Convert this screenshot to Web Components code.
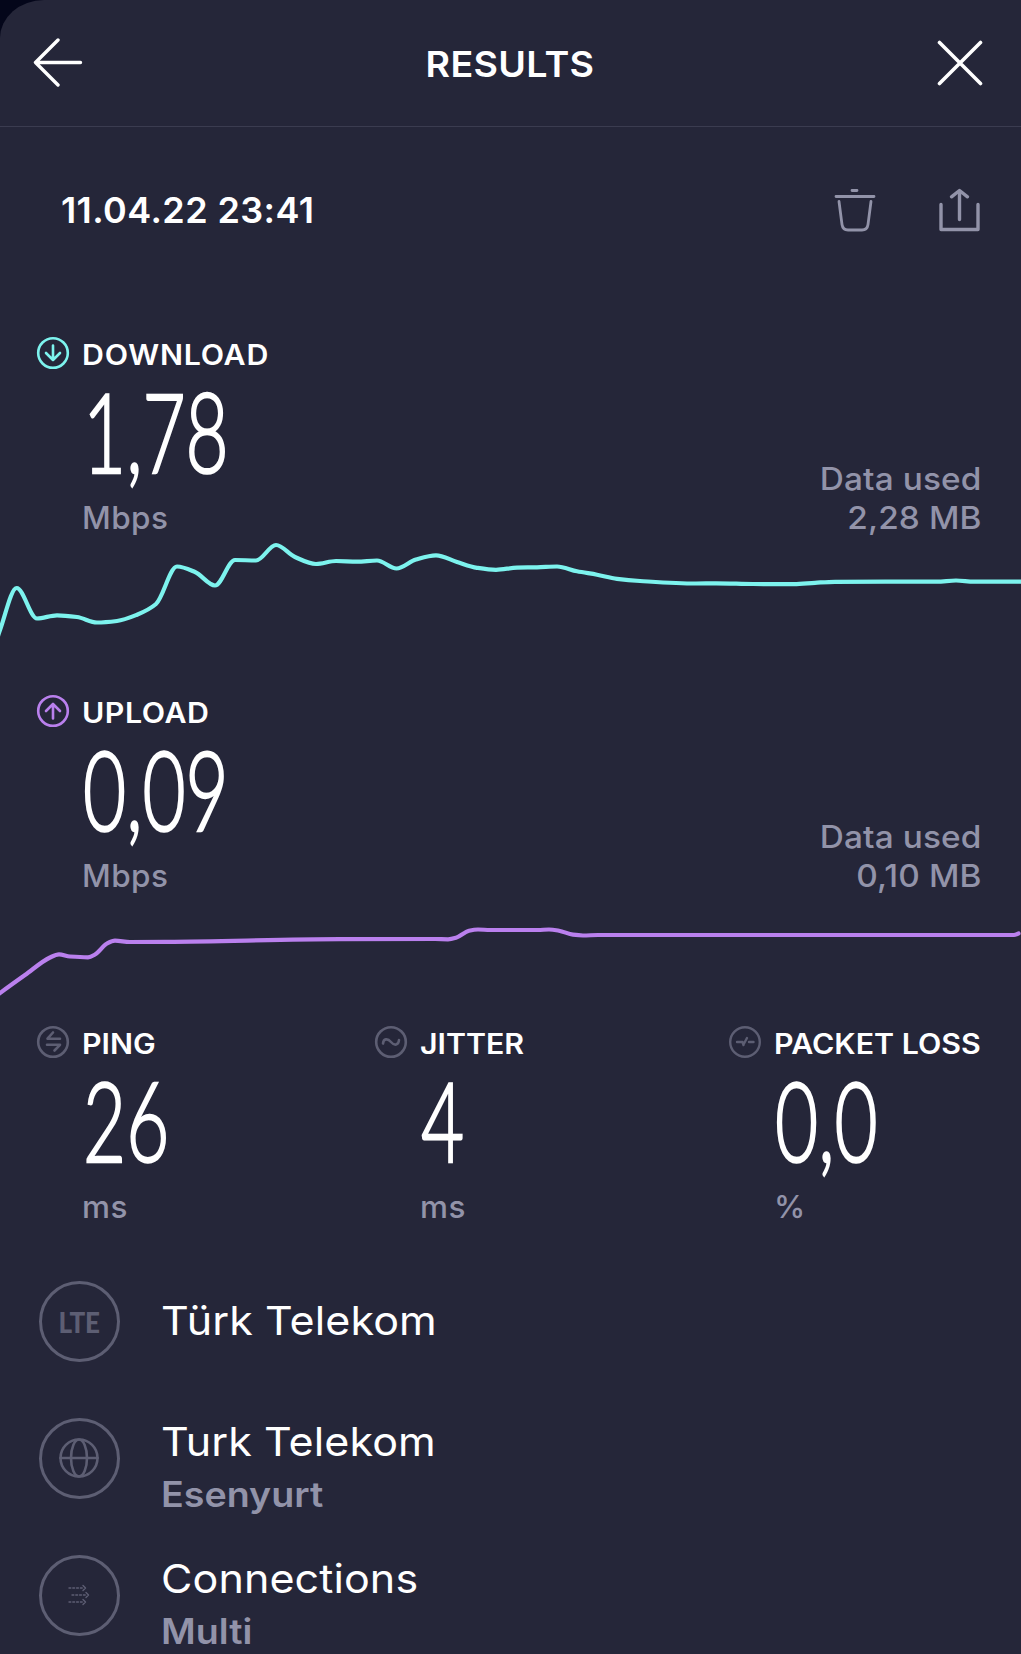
<!DOCTYPE html>
<html lang="en">
<head>
<meta charset="UTF-8">
<title>Results</title>
<style>
  :root {
    --bg: #252639;
    --backdrop: #04061a;
    --line: #3b3c50;
    --text: #ffffff;
    --muted: #9293a9;
    --ring: #5d5e73;
    --download: #7df3ee;
    --upload: #ba80ee;
  }
  body {
    margin: 0;
    background: var(--backdrop);
    color: var(--text);
    font-family: Inter, "Liberation Sans", sans-serif;
  }
</style>
</head>
<body>
<results-page>
  <page-header>RESULTS</page-header>
  <result-toolbar>11.04.22 23:41</result-toolbar>
  <speed-panel kind="download" label="DOWNLOAD" value="1,78" used="2,28 MB" tracking="0.7"></speed-panel>
  <speed-panel kind="upload" label="UPLOAD" value="0,09" used="0,10 MB" tracking="0.5"></speed-panel>
  <metric-row>
    <metric-value icon="ping" label="PING" value="26" unit="ms"></metric-value>
    <metric-value icon="jitter" label="JITTER" value="4" unit="ms"></metric-value>
    <metric-value icon="loss" label="PACKET LOSS" value="0,0" unit="%"></metric-value>
  </metric-row>
  <info-row icon="lte" name="Türk Telekom"></info-row>
  <info-row icon="globe" name="Turk Telekom" sub="Esenyurt"></info-row>
  <info-row icon="multi" name="Connections" sub="Multi"></info-row>
</results-page>

<script>
const ICONS = {
  back: `<svg width="50" height="50" viewBox="0 0 50 50" stroke-width="3.4"><path d="M25 2 2.500 24.500 25 47M2.500 24.500H47.500"/></svg>`,
  close: `<svg width="46" height="46" viewBox="0 0 46 46" stroke-width="3.6"><path d="M2.500 2.500l41 41M43.500 2.500l-41 41"/></svg>`,
  trash: `<svg width="42" height="44" viewBox="0 0 42 44" stroke-width="2.800"><path d="M18 2.500h5M2 8.500h38M5 13.500l3 23q.8 5.500 6 5.500h14q5.200 0 6-5.500l3-23"/></svg>`,
  share: `<svg width="42" height="44" viewBox="0 0 42 44" stroke-width="3.400"><path d="M2 16.500v25h37v-25M20.500 31.500V3M12.500 8.800 20.500 2.500l8 6.300"/></svg>`,
  download: `<svg width="34" height="34" viewBox="0 0 34 34" stroke-width="2.600"><circle cx="17" cy="17" r="14.800"/><path d="M17 9.500v14.500M10 17l7 7 7-7"/></svg>`,
  upload: `<svg width="34" height="34" viewBox="0 0 34 34" stroke-width="2.600"><circle cx="17" cy="17" r="14.800"/><path d="M17 24.500V10M10 17l7-7 7 7"/></svg>`,
  ping: `<svg width="34" height="34" viewBox="0 0 34 34" stroke-width="2.600"><circle cx="17" cy="17" r="14.800"/><path d="M17 7.500 11.500 13.700H24M11 19.800H24L18.500 25.500"/></svg>`,
  jitter: `<svg width="34" height="34" viewBox="0 0 34 34" stroke-width="2.600"><circle cx="17" cy="17" r="14.800"/><path d="M9 18.500c.5-5 4.500-5.500 8-1.500s7.500 3.500 8-2"/></svg>`,
  loss: `<svg width="34" height="34" viewBox="0 0 34 34" stroke-width="2.400"><circle cx="17" cy="17" r="14.800"/><path d="M9 17h5.500l1 3M15.500 19.500l3.500-6.500M21 17h4.500"/></svg>`,
  globe: `<svg width="42" height="42" viewBox="0 0 42 42" stroke-width="2.600"><circle cx="21" cy="21" r="18.500"/><ellipse cx="21" cy="21" rx="8" ry="18.500"/><path d="M2.500 21h37"/></svg>`,
  multi: `<svg width="24" height="24" viewBox="0 0 24 24" stroke-width="1.400"><path stroke-dasharray="1.800 2" d="M2 5h15M5 12h15M2 19h15"/><path d="M16 2.500 18.500 5 16 7.500M19 9.500 21.500 12 19 14.500M16 16.500 18.500 19 16 21.500"/></svg>`,
  lte: `<span class="lte">LTE</span>`
};

const CHARTS = {
  download: {
    top: 537,
    height: 114,
    points: [[-2, 636], [0, 630], [16.7, 588], [37, 618.500], [57, 615.300], [77, 617], [97, 622.500], [117, 621], [137, 614.700], [156, 604], [177, 566.500], [195, 572], [215, 585.500], [235, 560], [256, 560.500], [276, 545], [295, 557], [316, 564], [336, 561], [357, 561.700], [377, 560.500], [396.500, 568.500], [416, 559.500], [436, 555.300], [457, 562], [477, 567.800], [496, 569.800], [517, 567.600], [537, 567.300], [557, 566.500], [577, 571.300], [597, 574.700], [617, 578.800], [640, 581], [696, 583.500], [716, 583.300], [753, 584], [794, 584.200], [815, 582.800], [835, 581.800], [937, 581.600], [956, 580.500], [974, 581.700], [1022, 581.600]]
  },
  upload: {
    top: 895,
    height: 133,
    points: [[-2, 994.500], [0, 993], [25, 975], [50, 957.500], [59, 954.300], [70, 956.500], [88, 957.300], [95, 954.500], [107, 943.500], [115, 940.600], [130, 942], [167, 941.800], [340, 939.200], [435, 939], [448, 939.300], [456, 937.800], [469, 930.800], [478, 929.500], [490, 930], [538, 930], [549, 929.500], [559, 930.700], [573, 934.700], [583, 935.500], [598, 935], [1014, 935], [1018.500, 933.500]]
  }
};

// Each segment uses the slope of its neighbours, flattened at local peaks.
function smoothPath(points) {
  const slope = points.map((p, i) => {
    const a = points[i - 1], b = points[i + 1];
    if (!a || !b) return null;
    const s0 = (p[1] - a[1]) / (p[0] - a[0]);
    const s1 = (b[1] - p[1]) / (b[0] - p[0]);
    return s0 * s1 <= 0 ? 0 : (2 * s0 * s1) / (s0 + s1);
  });
  let d = `M${points[0]}`;
  for (let i = 1; i < points.length; i++) {
    const [x0, y0] = points[i - 1], [x1, y1] = points[i];
    const h = (x1 - x0) / 3;
    const line = (y1 - y0) / (x1 - x0);
    const m0 = slope[i - 1] ?? line, m1 = slope[i] ?? line;
    d += `C${x0 + h} ${y0 + m0 * h} ${x1 - h} ${y1 - m1 * h} ${x1} ${y1}`;
  }
  return d;
}

const SVG_STYLE = `svg { display: block; fill: none; stroke: currentColor; stroke-linecap: round; stroke-linejoin: round; }`;

class BaseElement extends HTMLElement {
  constructor() {
    super();
    this.attachShadow({ mode: "open" });
  }

  connectedCallback() {
    this.shadowRoot.innerHTML = `<style>${SVG_STYLE}</style>` + this.template();
  }

  attr(name) {
    return this.getAttribute(name) || "";
  }
}

class ResultsPage extends BaseElement {
  template() {
    return `
      <style>
        :host {
          display: block;
          height: 1654px;
          overflow: hidden;
          background: var(--bg);
          border-top-left-radius: 44px 38px;
        }
      </style>
      <slot></slot>
    `;
  }
}
customElements.define("results-page", ResultsPage);

class PageHeader extends BaseElement {
  template() {
    return `
      <style>
        :host {
          display: grid;
          grid-template-columns: 50px 1fr 46px;
          align-items: center;
          height: 126px;
          padding: 0 38px 0 33px;
          border-bottom: 1px solid var(--line);
        }
        h1 {
          margin: 0;
          padding-top: 2px;
          text-align: center;
          font-size: 36px;
          font-weight: 600;
          letter-spacing: 0.3px;
          transform: scaleX(1.045);
        }
      </style>
      ${ICONS.back}
      <h1><slot></slot></h1>
      ${ICONS.close}
    `;
  }
}
customElements.define("page-header", PageHeader);

class ResultToolbar extends BaseElement {
  template() {
    return `
      <style>
        :host {
          display: flex;
          align-items: center;
          height: 166px;
          padding: 0 40px 0 61px;
        }
        .date {
          flex: 1;
          font-size: 36px;
          font-weight: 600;
          letter-spacing: 0.4px;
        }
        .actions {
          display: flex;
          gap: 63px;
          color: var(--muted);
        }
      </style>
      <span class="date"><slot></slot></span>
      <div class="actions">${ICONS.trash}${ICONS.share}</div>
    `;
  }
}
customElements.define("result-toolbar", ResultToolbar);

class MetricValue extends BaseElement {
  template() {
    return `
      <style>
        :host {
          display: grid;
          grid-template-columns: 34px max-content;
          column-gap: 12px;
        }
        .icon {
          color: var(--icon, var(--ring));
          margin-top: -3px;
          height: 34px;
        }
        .label {
          font-size: 28px;
          font-weight: 600;
          line-height: 32px;
          height: 32px;
          letter-spacing: ${this.attr("tracking") || 0}px;
          white-space: nowrap;
          transform: scaleX(1.083);
          transform-origin: 0 0;
        }
        .value {
          grid-column: 2;
          justify-self: start;
          width: 0;
          margin: 14px 0 0 1px;
          font-family: Lato, "Open Sans", sans-serif;
          font-size: 111px;
          font-weight: 300;
          line-height: 90px;
          white-space: nowrap;
          transform: scaleX(0.67);
          transform-origin: 0 0;
          -webkit-text-stroke: 2.4px currentColor;
        }
        .unit {
          grid-column: 2;
          margin-top: 23px;
          color: var(--muted);
          font-size: 31.5px;
          font-weight: 500;
          line-height: 39px;
          letter-spacing: 0.4px;
        }
      </style>
      <span class="icon">${ICONS[this.attr("icon")]}</span>
      <span class="label">${this.attr("label")}</span>
      <span class="value">${this.attr("value")}</span>
      <span class="unit">${this.attr("unit")}</span>
    `;
  }
}
customElements.define("metric-value", MetricValue);

class SpeedPanel extends BaseElement {
  template() {
    const kind = this.attr("kind");
    const chart = CHARTS[kind];
    return `
      <style>
        :host { display: block; }
        .body {
          display: flex;
          justify-content: space-between;
          align-items: flex-end;
          padding: 46px 39px 0 36px;
        }
        metric-value { --icon: var(--${kind}); }
        .used {
          color: var(--muted);
          font-size: 31.5px;
          font-weight: 500;
          line-height: 39px;
          letter-spacing: 0.1px;
          text-align: right;
          transform: scaleX(1.06);
          transform-origin: 100% 0;
        }
        .chart { color: var(--${kind}); }
      </style>
      <div class="body">
        <metric-value icon="${kind}" label="${this.attr("label")}" value="${this.attr("value")}" unit="Mbps" tracking="${this.attr("tracking")}"></metric-value>
        <div class="used">Data used<br>${this.attr("used")}</div>
      </div>
      <svg class="chart" width="1021" height="${chart.height}" viewBox="0 ${chart.top} 1021 ${chart.height}" stroke-width="4.200">
        <path d="${smoothPath(chart.points)}"/>
      </svg>
    `;
  }
}
customElements.define("speed-panel", SpeedPanel);

class MetricRow extends BaseElement {
  template() {
    return `
      <style>
        :host {
          display: grid;
          grid-template-columns: 338px 354px auto;
          padding: 0 0 26px 36px;
        }
      </style>
      <slot></slot>
    `;
  }
}
customElements.define("metric-row", MetricRow);

class InfoRow extends BaseElement {
  template() {
    const sub = this.attr("sub");
    return `
      <style>
        :host {
          display: flex;
          align-items: center;
          gap: 41px;
          box-sizing: border-box;
          height: 137px;
          padding: 1px 0 0 38.5px;
        }
        .ring {
          box-sizing: border-box;
          display: grid;
          place-items: center;
          width: 81px;
          height: 81px;
          border: 3px solid var(--ring);
          border-radius: 50%;
          color: var(--ring);
        }
        .lte {
          padding-top: 1px;
          font-family: Lato, "Open Sans", sans-serif;
          font-size: 28px;
          font-weight: 900;
          line-height: 30px;
          letter-spacing: -0.3px;
          transform: scaleX(0.93);
        }
        .name, .sub {
          transform: scaleX(1.075);
          transform-origin: 0 0;
        }
        .name {
          font-size: 40px;
          font-weight: 400;
          line-height: 52px;
          letter-spacing: 0.1px;
        }
        .sub {
          color: var(--muted);
          font-size: 35px;
          font-weight: 600;
          line-height: 53px;
        }
        .has-sub { padding-top: 20px; }
      </style>
      <div class="ring">${ICONS[this.attr("icon")]}</div>
      <div class="${sub ? "has-sub" : ""}">
        <div class="name">${this.attr("name")}</div>
        ${sub ? `<div class="sub">${sub}</div>` : ""}
      </div>
    `;
  }
}
customElements.define("info-row", InfoRow);
</script>
</body>
</html>
